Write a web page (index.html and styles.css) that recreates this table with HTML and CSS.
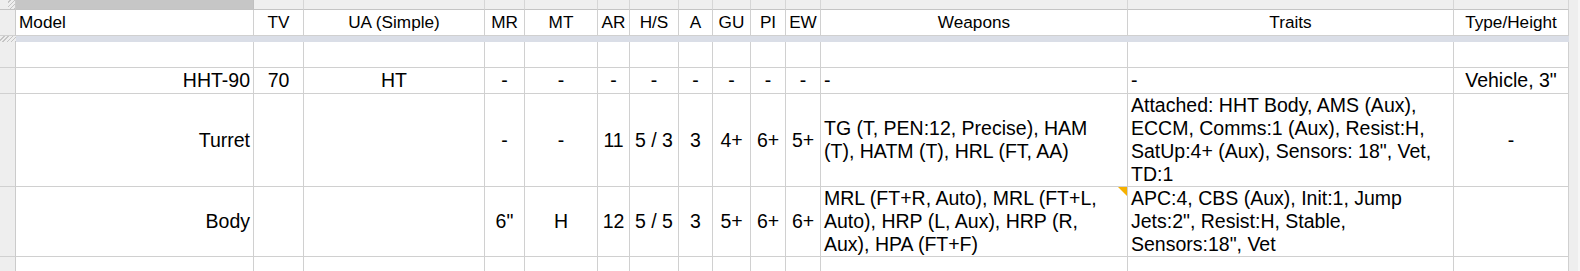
FILE: index.html
```html
<!DOCTYPE html>
<html>
<head>
<meta charset="utf-8">
<title>Sheet</title>
<link rel="stylesheet" href="styles.css">
</head>
<body>
<div class="sheet">
  <div class="row strip">
    <div class="corner"><span class="hatch"></span></div>
    <div class="ch sel"></div><div class="ch"></div><div class="ch"></div><div class="ch"></div><div class="ch"></div><div class="ch"></div><div class="ch"></div><div class="ch"></div><div class="ch"></div><div class="ch"></div><div class="ch"></div><div class="ch"></div><div class="ch"></div><div class="ch"></div>
    <div class="gut"></div>
  </div>

  <div class="row hdr">
    <div class="rh"></div>
    <div class="cell l">Model</div>
    <div class="cell c">TV</div>
    <div class="cell c">UA (Simple)</div>
    <div class="cell c">MR</div>
    <div class="cell c">MT</div>
    <div class="cell c">AR</div>
    <div class="cell c">H/S</div>
    <div class="cell c">A</div>
    <div class="cell c">GU</div>
    <div class="cell c">PI</div>
    <div class="cell c">EW</div>
    <div class="cell c">Weapons</div>
    <div class="cell c">Traits</div>
    <div class="cell c">Type/Height</div>
    <div class="gut"></div>
  </div>

  <div class="row freeze">
    <div class="fz-corner"></div>
    <div class="fz-band"></div>
    <div class="gut"></div>
  </div>

  <div class="row r26">
    <div class="rh"></div>
    <div class="cell"></div><div class="cell"></div><div class="cell"></div><div class="cell"></div><div class="cell"></div><div class="cell"></div><div class="cell"></div><div class="cell"></div><div class="cell"></div><div class="cell"></div><div class="cell"></div><div class="cell"></div><div class="cell"></div><div class="cell"></div>
    <div class="gut"></div>
  </div>

  <div class="row r26">
    <div class="rh"></div>
    <div class="cell r">HHT-90</div>
    <div class="cell c">70</div>
    <div class="cell c">HT</div>
    <div class="cell c">-</div>
    <div class="cell c">-</div>
    <div class="cell c">-</div>
    <div class="cell c">-</div>
    <div class="cell c">-</div>
    <div class="cell c">-</div>
    <div class="cell c">-</div>
    <div class="cell c">-</div>
    <div class="cell l">-</div>
    <div class="cell l">-</div>
    <div class="cell c">Vehicle, 3&quot;</div>
    <div class="gut"></div>
  </div>

  <div class="row turret">
    <div class="rh"></div>
    <div class="cell r">Turret</div>
    <div class="cell c"></div>
    <div class="cell c"></div>
    <div class="cell c">-</div>
    <div class="cell c">-</div>
    <div class="cell c">11</div>
    <div class="cell c">5 / 3</div>
    <div class="cell c">3</div>
    <div class="cell c">4+</div>
    <div class="cell c">6+</div>
    <div class="cell c">5+</div>
    <div class="cell l"><div>TG (T, PEN:12, Precise), HAM<br>(T), HATM (T), HRL (FT, AA)</div></div>
    <div class="cell l"><div>Attached: HHT Body, AMS (Aux),<br>ECCM, Comms:1 (Aux), Resist:H,<br>SatUp:4+ (Aux), Sensors: 18&quot;, Vet,<br>TD:1</div></div>
    <div class="cell c">-</div>
    <div class="gut"></div>
  </div>

  <div class="row body">
    <div class="rh"></div>
    <div class="cell r">Body</div>
    <div class="cell c"></div>
    <div class="cell c"></div>
    <div class="cell c">6&quot;</div>
    <div class="cell c">H</div>
    <div class="cell c">12</div>
    <div class="cell c">5 / 5</div>
    <div class="cell c">3</div>
    <div class="cell c">5+</div>
    <div class="cell c">6+</div>
    <div class="cell c">6+</div>
    <div class="cell l note"><div>MRL (FT+R, Auto), MRL (FT+L,<br>Auto), HRP (L, Aux), HRP (R,<br>Aux), HPA (FT+F)</div><span class="note-mark"></span></div>
    <div class="cell l"><div>APC:4, CBS (Aux), Init:1, Jump<br>Jets:2&quot;, Resist:H, Stable,<br>Sensors:18&quot;, Vet</div></div>
    <div class="cell c"></div>
    <div class="gut"></div>
  </div>

  <div class="row last">
    <div class="rh"></div>
    <div class="cell"></div><div class="cell"></div><div class="cell"></div><div class="cell"></div><div class="cell"></div><div class="cell"></div><div class="cell"></div><div class="cell"></div><div class="cell"></div><div class="cell"></div><div class="cell"></div><div class="cell"></div><div class="cell"></div><div class="cell"></div>
    <div class="gut"></div>
  </div>
</div>
</body>
</html>
```

FILE: styles.css
```css
html, body {
  margin: 0;
  padding: 0;
  background: #ffffff;
}

body {
  font-family: "Liberation Sans", Arial, sans-serif;
  color: #000000;
}

.sheet {
  width: 1580px;
  height: 271px;
  overflow: hidden;
}

.row {
  display: grid;
  grid-template-columns: 16px 238px 50px 181px 40px 73px 32px 49px 34px 38px 35px 35px 307px 326px 115px 11px;
}

.cell {
  box-sizing: border-box;
  border-right: 1px solid #d0d0d0;
  border-bottom: 1px solid #d0d0d0;
  display: flex;
  align-items: center;
  padding: 0 3px;
  white-space: nowrap;
  overflow: hidden;
  font-size: 19.5px;
  line-height: 23px;
  min-width: 0;
}

.cell.l { justify-content: flex-start; }
.cell.c { justify-content: center; }
.cell.r { justify-content: flex-end; }

.rh {
  box-sizing: border-box;
  background: #eeeeee;
  border-right: 1px solid #cbcbcb;
  border-bottom: 1px solid #d0d0d0;
}

.gut {
  background: #eeeeee;
  box-shadow: inset -2px 0 0 #f6f6f6;
}

/* column header strip */
.strip { height: 10px; }

.corner {
  box-sizing: border-box;
  background: #eeeeee;
  border-right: 1px solid #cbcbcb;
  border-bottom: 1px solid #c4c4c4;
  display: flex;
  justify-content: flex-end;
}

.hatch {
  width: 7px;
  height: 100%;
  background: repeating-linear-gradient(-45deg, #c4c4c4 0 1px, #eeeeee 1px 3px);
}

.ch {
  box-sizing: border-box;
  background: #efefef;
  border-right: 1px solid #d6d6d6;
  border-bottom: 1px solid #c4c4c4;
}

.ch.sel { background: #c6c6c6; border-right-color: #c0c0c0; }

/* header row */
.hdr { height: 26px; }
.hdr .cell {
  font-size: 17.2px;
  line-height: 20px;
  padding-bottom: 1px;
}

/* frozen divider */
.freeze { height: 6px; }
.fz-corner {
  background: repeating-linear-gradient(-45deg, #c4c4c4 0 1px, #eeeeee 1px 3px);
}
.fz-band {
  grid-column: span 14;
  background: #dadee7;
}

.r26 { height: 26px; }
.turret { height: 93px; }
.body { height: 70px; }
.last { height: 16px; }

.note { position: relative; }
.note-mark {
  position: absolute;
  top: 0;
  right: 0;
  width: 0;
  height: 0;
  border-top: 9px solid #f6b100;
  border-left: 9px solid transparent;
}
```
